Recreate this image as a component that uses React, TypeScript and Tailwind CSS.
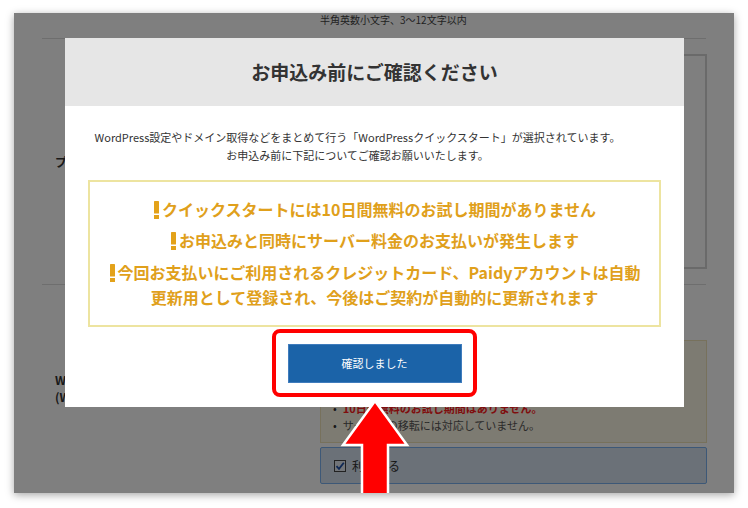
import React from "react";

const FONT = "font-['Noto_Sans_CJK_JP','Noto_Sans',sans-serif]";

// 注意書きの先頭に付くオレンジの「!」
function Bang() {
  return (
    <svg width="7" height="18" viewBox="0 0 7 18" className="inline-block mr-[2px] -mt-[3px] align-middle">
      <rect x="1" y="0" width="5" height="12.5" rx="0.6" fill="#e3a21a" />
      <rect x="1" y="14" width="5" height="4" fill="#e3a21a" />
    </svg>
  );
}

function UnderlyingPage() {
  return (
    <div className="text-[#333]">
      {/* ヒント行 */}
      <div className="h-[25px] pl-[306px] text-[10px] leading-[14px] text-[#444]">
        半角英数小文字、3～12文字以内
      </div>
      <div className="mx-[28px] border-t border-[#dcdcdc]" />

      {/* プラン行 */}
      <div className="mx-[28px] flex h-[245px] items-center">
        <div className="w-[278px] pl-[13px] text-[12px] font-bold">プラン</div>
        <div className="h-[215px] flex-1 border-2 border-[#d4d4d4] mr-[-1px]" />
      </div>
      <div className="mx-[28px] border-t border-[#dcdcdc]" />

      {/* WordPressクイックスタート行 */}
      <div className="mx-[28px] flex">
        <div className="w-[278px] pl-[13px] pt-[86px] text-[12px] font-bold leading-[17px]">
          WordPressクイックスタート
          <br />
          (WordPress簡単インストール)
        </div>
        <div className="flex-1 pt-[55px] mr-[-1px]">
          <div className="flex h-[103px] flex-col justify-end overflow-hidden border border-[#efe3b8] bg-[#fbf6e4] px-[12px] pb-[8px] text-[11px] leading-[17px]">
            <p className="mb-1">以下の点にご注意ください。</p>
            <ul>
              <li className="flex gap-[6px]">
                <span className="text-[#333]">•</span>
                <span className="font-bold text-[#ff1a1a]">10日間無料のお試し期間はありません。</span>
              </li>
              <li className="flex gap-[6px]">
                <span>•</span>
                <span className="text-[#555]">サーバーの移転には対応していません。</span>
              </li>
            </ul>
          </div>
          <div className="mt-[4px] flex h-[37px] items-center gap-[6px] rounded-[2px] border border-[#7ab0ee] bg-[#d6e2f0] pl-[13px] text-[12px]">
            <span className="flex h-[12px] w-[12px] items-center justify-center border border-[#444] bg-[#e4ebf3]">
              <svg width="10" height="10" viewBox="0 0 10 10">
                <path d="M1.5 5.2 L4 7.8 L8.8 1.8" fill="none" stroke="#1d4fa8" strokeWidth="1.8" />
              </svg>
            </span>
            利用する
          </div>
        </div>
      </div>
    </div>
  );
}

export default function App() {
  return (
    <div className={`h-[508px] w-[748px] overflow-hidden bg-white pt-[13px] pl-[14px] ${FONT}`}>
      <div className="relative h-[480px] w-[720px] overflow-hidden bg-white shadow-[0_2px_8px_rgba(0,0,0,0.35)]">
        <UnderlyingPage />

        {/* オーバーレイ */}
        <div className="absolute inset-0 bg-black/50" />

        {/* モーダル */}
        <div className="absolute left-[51px] top-[25px] h-[369px] w-[619px] bg-white">
          <div className="flex h-[68px] items-center justify-center bg-[#e6e6e6] text-[19px] font-bold text-[#333]">
            お申込み前にご確認ください
          </div>
          <div className="pt-[22px] pr-[34px] text-center text-[11px] leading-[18px] text-[#333]">
            WordPress設定やドメイン取得などをまとめて行う「WordPressクイックスタート」が選択されています。
            <br />
            お申込み前に下記についてご確認お願いいたします。
          </div>
          <div className="mx-[23px] mt-[16px] h-[147px] border-2 border-[#ede4a0] pt-[15px] text-center text-[16px] font-bold leading-[25px] text-[#e0a01b]">
            <p>
              <Bang />
              クイックスタートには10日間無料のお試し期間がありません
            </p>
            <p className="mt-[6px]">
              <Bang />
              お申込みと同時にサーバー料金のお支払いが発生します
            </p>
            <p className="mt-[7px]">
              <Bang />
              今回お支払いにご利用されるクレジットカード、Paidyアカウントは自動
              <br />
              更新用として登録され、今後はご契約が自動的に更新されます
            </p>
          </div>
          <div className="mt-[17px] flex justify-center">
            <button className="h-[39px] w-[174px] border border-[#3f7cbd] bg-[#1b63a8] text-[11px] text-white">
              確認しました
            </button>
          </div>
        </div>

        {/* 強調の赤枠と矢印 */}
        <div className="absolute left-[258px] top-[316px] h-[68px] w-[205px] rounded-[8px] border-4 border-[#ff0000]" />
        <svg className="absolute left-[325px] top-[384px]" width="72" height="100" viewBox="0 0 72 100">
          <path
            d="M36 4 L68 48 L49 48 L49 104 L23 104 L23 48 L4 48 Z"
            fill="#ff0000"
            stroke="#ffffff"
            strokeWidth="2.5"
            strokeLinejoin="miter"
          />
        </svg>
      </div>
    </div>
  );
}
